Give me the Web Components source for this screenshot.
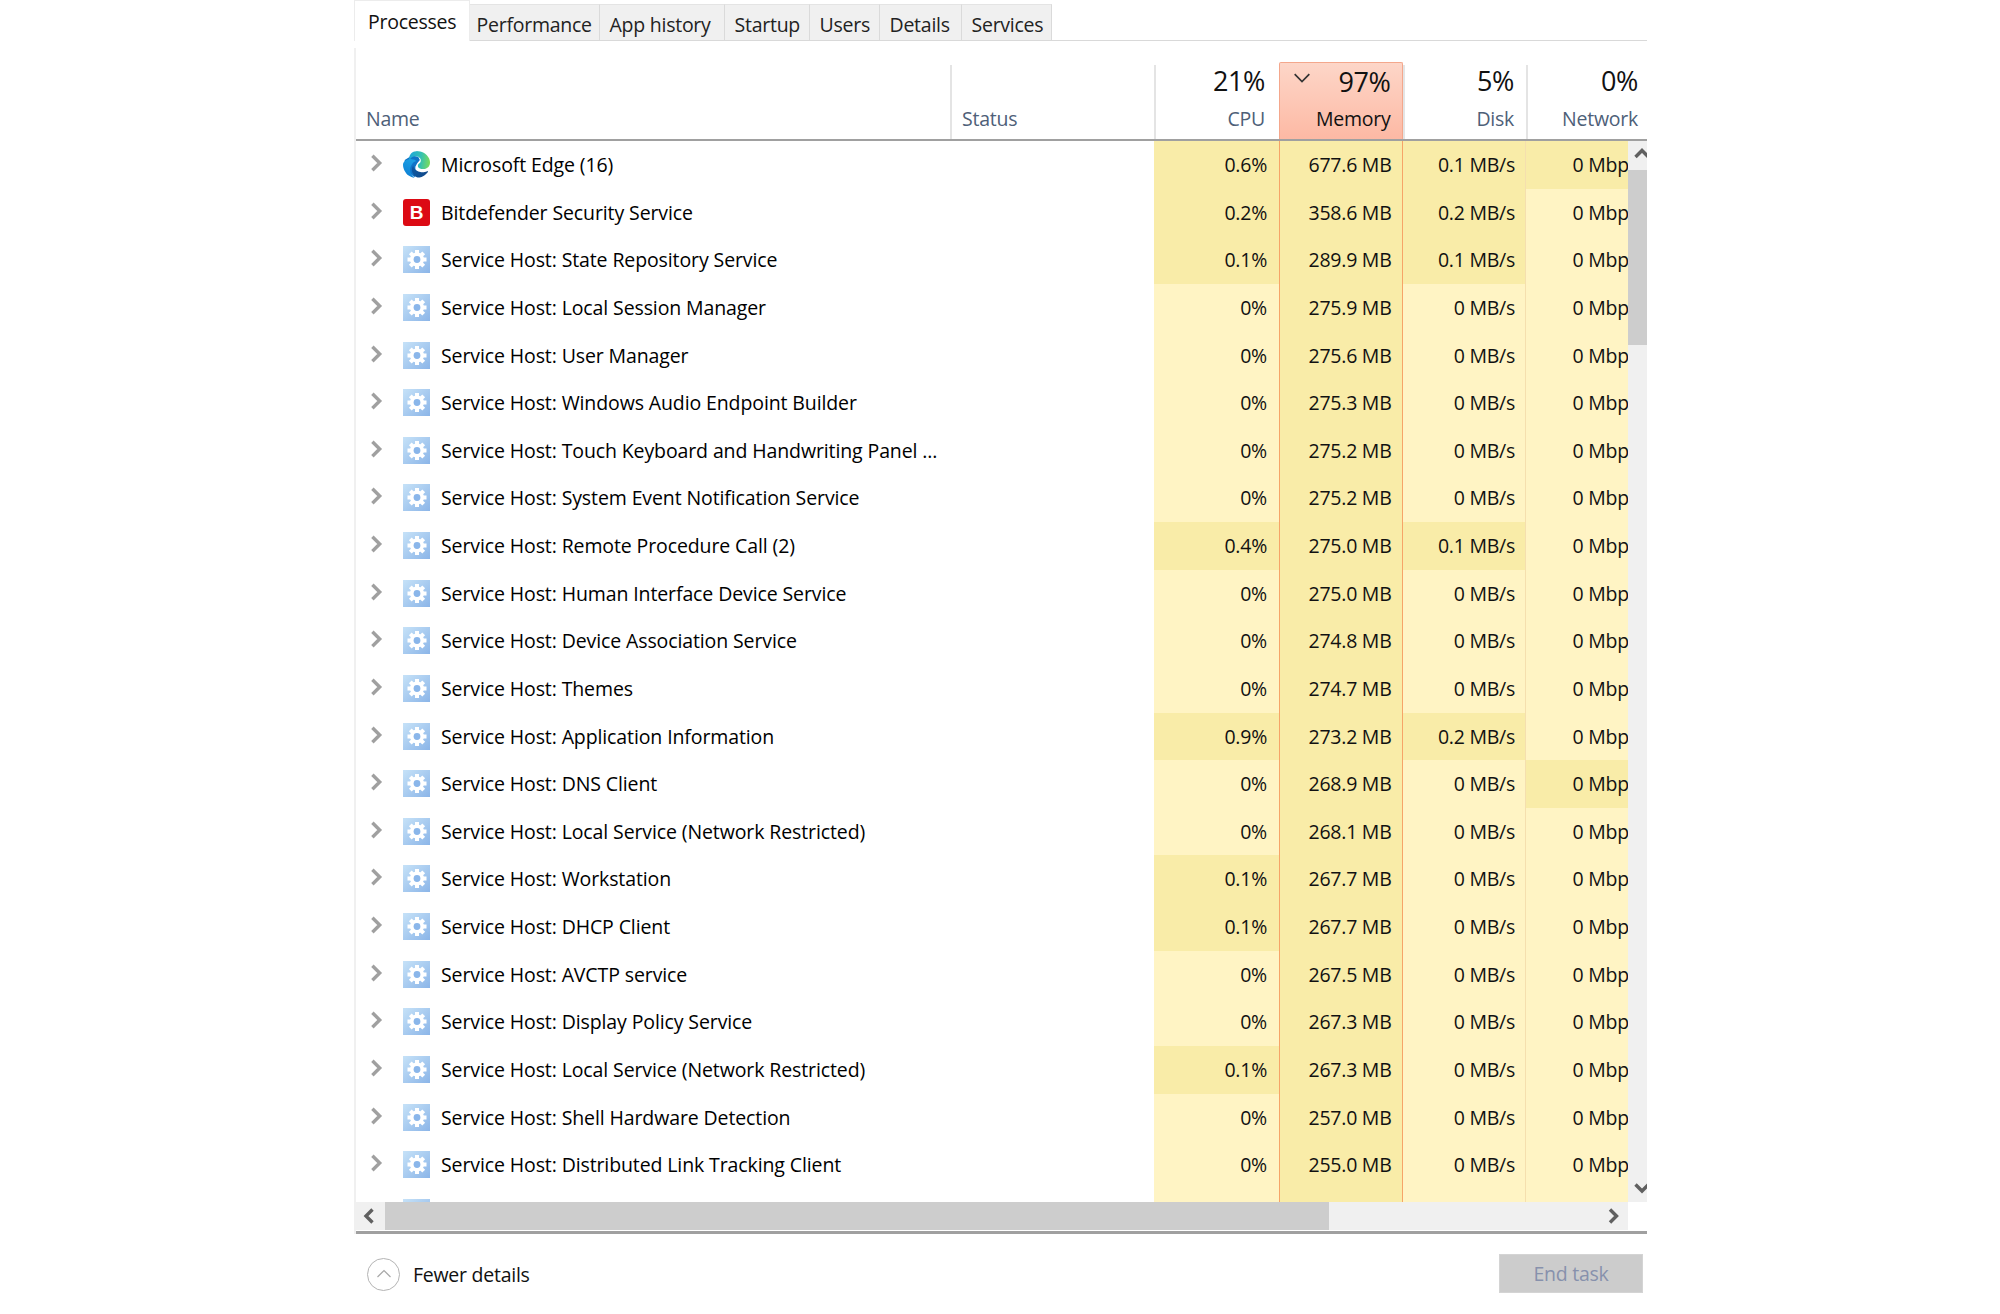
<!DOCTYPE html>
<html>
<head>
<meta charset="utf-8">
<title>Task Manager</title>
<style>
    html, body { margin: 0; padding: 0; background: #fff; }
    body { font-family: "Open Sans", "Liberation Sans", sans-serif; font-size: 19.5px; letter-spacing: -0.25px; color: #111; }
</style>
</head>
<body>
<tm-app></tm-app>
<script>
const gearIcon = `
<svg width="27" height="27" viewBox="0 0 27 27">
  <defs><linearGradient id="g" x1="0" y1="0" x2="1" y2="1"><stop offset="0" stop-color="#c6e2f8"/><stop offset="1" stop-color="#8bb5e8"/></linearGradient></defs>
  <rect width="27" height="27" fill="url(#g)"/>
  <g fill="#fff" stroke="#fff">
    <circle cx="14" cy="13.5" r="7" stroke="none"/>
    <g stroke-width="4">
      <path d="M14 4v19M4.5 13.5h19M7.3 6.8l13.4 13.4M20.7 6.8L7.3 20.2"/>
    </g>
  </g>
  <circle cx="14" cy="13.5" r="3.4" fill="#8ab6ea"/>
</svg>`;

const edgeIcon = `
<svg width="27" height="27" viewBox="0 0 24 24">
  <defs>
    <linearGradient id="e1" x1="0" y1="0" x2="1" y2="0.3"><stop offset="0" stop-color="#0c59a4"/><stop offset="1" stop-color="#114a8b"/></linearGradient>
    <linearGradient id="e2" x1="0.6" y1="0.1" x2="0.3" y2="1"><stop offset="0" stop-color="#1b9de2"/><stop offset="1" stop-color="#0c7ed4"/></linearGradient>
    <linearGradient id="e3" x1="0" y1="0.5" x2="1" y2="0.6"><stop offset="0" stop-color="#1fa8d8"/><stop offset="0.55" stop-color="#35c1b1"/><stop offset="1" stop-color="#7bdc5a"/></linearGradient>
  </defs>
  <path fill="#0f74c8" d="M1.5 8L8 4l5.5 1L15 8l-2.5 3L11 14v3l3 2-2 3-2 1-4-3-4-5z"/>
  <path fill="url(#e1)" d="M21.86 17.86q.14 0 .25.12.1.13.1.25t-.11.33l-.32.46-.43.53-.44.5q-.21.25-.38.42l-.22.23q-.58.53-1.34 1.04-.76.51-1.6.91-.86.4-1.74.64t-1.67.24q-.9 0-1.69-.28-.8-.28-1.48-.78-.68-.5-1.22-1.17-.53-.66-.92-1.44-.38-.77-.58-1.6-.2-.83-.2-1.67 0-1 .32-1.96.33-.97.87-1.8.14.95.55 1.77.41.82 1.02 1.5.6.68 1.38 1.21.78.54 1.64.9.86.36 1.77.56.92.2 1.8.2 1.12 0 2.18-.24 1.06-.23 2.06-.72l.2-.1.2-.05z"/>
  <path fill="url(#e2)" d="M6.36 16.59q0 1.1.27 2.15.27 1.06.78 2.03.51.96 1.24 1.77.74.82 1.66 1.4-1.47-.2-2.8-.74-1.33-.55-2.48-1.37-1.15-.83-2.08-1.9-.92-1.07-1.58-2.33T.36 14.94Q0 13.54 0 12.06q0-.81.32-1.49.31-.68.83-1.23.53-.55 1.2-.96.66-.4 1.35-.66.74-.27 1.5-.39.78-.12 1.55-.12.7 0 1.42.1.72.12 1.4.35.68.23 1.32.57.63.35 1.16.83-.35 0-.7.07-.33.07-.65.23v-.02q-.63.28-1.2.74-.57.46-1.05 1.04-.48.58-.87 1.26-.38.67-.65 1.39-.27.71-.42 1.44-.15.72-.15 1.38z"/>
  <path fill="url(#e3)" d="M11.96.06q1.7 0 3.33.39 1.63.38 3.07 1.15 1.43.77 2.62 1.93 1.18 1.16 1.98 2.7.49.94.76 1.96.28 1 .28 2.08 0 .89-.23 1.7-.24.8-.69 1.48-.45.68-1.1 1.22-.64.53-1.45.88-.54.24-1.11.36-.58.13-1.16.13-.42 0-.97-.03-.54-.03-1.1-.12-.55-.09-1.09-.28-.53-.2-.95-.53t-.68-.8q-.25-.5-.25-1.12 0-.37.11-.68.1-.31.3-.6.2-.28.45-.52.25-.24.53-.47l.06-.06q.55-.5.87-1.11.31-.62.31-1.34 0-.77-.4-1.45-.4-.68-1.06-1.18-.66-.5-1.46-.77-.8-.27-1.6-.27-.92 0-1.76.23-.85.23-1.56.65-.72.42-1.3 1-.57.59-.95 1.29-.22-.86-.22-1.68 0-.75.24-1.52.24-.76.64-1.43.41-.67.96-1.2.56-.54 1.17-.86.82-.43 1.72-.66.9-.23 1.82-.23z"/>
</svg>`;

const bitIcon = `<span class="bd">B</span>`;

const chevron = (dir, color, w, size = 16) => {
    const d = { right: 'M3 1.5l6.5 6.5L3 14.5', left: 'M9.5 1.5L3 8l6.5 6.5', up: 'M1.5 10L8 3.5l6.5 6.5', down: 'M1.5 5.5L8 12l6.5-6.5' }[dir];
    return `<svg style="display:block" width="${size}" height="${size}" viewBox="0 0 16 16" fill="none" stroke="${color}" stroke-width="${w}"><path d="${d}"/></svg>`;
};

class TmTab extends HTMLElement {
    constructor() {
        super();
        this.attachShadow({ mode: 'open' });
        this.shadowRoot.innerHTML = `
        <style>
            :host { display: block; box-sizing: border-box; height: 37px; margin-top: 4px; background: #f0f0f0; border-top: 1px solid #e4e4e4; border-right: 1px solid #dadada; border-bottom: 1px solid #d9d9d9; padding-left: 10px; line-height: 39px; color: #222; white-space: nowrap; }
            :host([active]) { height: 41px; margin-top: 0; background: #fff; border: 1px solid #ececec; border-bottom: 0; padding-left: 13px; line-height: 42px; color: #111; }
        </style>
        <slot></slot>`;
        this.style.width = this.getAttribute('w') + 'px';
        if (this.hasAttribute('pad')) this.style.paddingLeft = this.getAttribute('pad') + 'px';
    }
}
customElements.define('tm-tab', TmTab);

class TmHeadCell extends HTMLElement {
    constructor() {
        super();
        this.attachShadow({ mode: 'open' });
        const pct = this.getAttribute('pct');
        const sorted = this.hasAttribute('sorted');
        this.shadowRoot.innerHTML = `
        <style>
            :host { display: block; box-sizing: border-box; position: relative; height: 74px; border-left: 2px solid #e4e4e4; padding-right: 11px; text-align: right; color: #4e6078; }
            :host([left]) { text-align: left; padding: 0 0 0 10px; }
            :host([first]) { border-left: 0; padding-left: 10px; }
            :host([sorted]) { height: 77px; border: 1px solid #f4a78c; border-bottom: 0; border-radius: 2px 2px 0 0; background: linear-gradient(#fdd6c8, #fdb9a4); color: #111; padding-top: 3px; padding-right: 11px; margin-top: -3px; }
            .pct { height: 36px; line-height: 31px; font-size: 27px; color: #111; letter-spacing: -0.4px; }
            .lbl { height: 36px; line-height: 35px; }
            :host([sorted]) .lbl { line-height: 33px; }
            .sort { position: absolute; left: 13px; top: 5px; }
        </style>
        ${sorted ? `<span class="sort">${chevron('down', '#333', 1.5, 18)}</span>` : ''}
        <div class="pct">${pct || ''}</div>
        <div class="lbl"><slot></slot></div>`;
    }
}
customElements.define('tm-head-cell', TmHeadCell);

class TmHeader extends HTMLElement {
    constructor() {
        super();
        this.attachShadow({ mode: 'open' });
        this.shadowRoot.innerHTML = `
        <style>
            :host { display: grid; box-sizing: border-box; height: 93px; padding-top: 17px; grid-template-columns: var(--cols); width: 1291px; overflow: hidden; border-bottom: 2px solid #a0a0a0; }
        </style>
        <tm-head-cell first left>Name</tm-head-cell>
        <tm-head-cell left>Status</tm-head-cell>
        <tm-head-cell pct="21%" style="padding-right:14px">CPU</tm-head-cell>
        <tm-head-cell pct="97%" sorted>Memory</tm-head-cell>
        <tm-head-cell pct="5%" style="padding-right:12px">Disk</tm-head-cell>
        <tm-head-cell pct="0%">Network</tm-head-cell>`;
    }
}
customElements.define('tm-header', TmHeader);

class TmRow extends HTMLElement {
    constructor() {
        super();
        this.attachShadow({ mode: 'open' });
        const a = n => this.getAttribute(n);
        const hot = (a('hot') || '').split(',');
        const icon = { edge: edgeIcon, bit: bitIcon, gear: gearIcon }[a('icon')];
        const cell = (key, val) => `<div class="cell ${key} ${hot.includes(key) ? 'med' : ''}">${val}</div>`;
        this.shadowRoot.innerHTML = `
        <style>
            :host { display: grid; height: 47.63px; grid-template-columns: var(--cols); line-height: 48px; white-space: nowrap; }
            .name { display: flex; align-items: flex-start; }
            .exp { display: block; width: 18px; height: 18px; margin: 13px 0 0 13px; }
            .ico { display: block; width: 27px; height: 27px; margin: 10px 0 0 16px; }
            .ico svg { display: block; }
            .bd { display: block; width: 27px; height: 27px; border-radius: 3px; background: #dc0a14; color: #fff; font: bold 19px/27px "Liberation Sans", sans-serif; text-align: center; letter-spacing: 0; }
            .txt { margin-left: 11px; color: #000; letter-spacing: -0.11px; }
            .cell { box-sizing: border-box; background: #fff4c4; text-align: right; padding-right: 11px; color: #111; }
            .med { background: #f9eca8; }
            .cpu { padding-right: 12px; }
            .mem { background: #f9eca8; border-left: 1px solid #f6a468; border-right: 1px solid #f6a468; padding-right: 10px; }
            .disk { border-right: 1px solid #f5dfae; padding-right: 10px; }
        </style>
        <div class="name">
            <span class="exp">${chevron('right', '#a0a0a0', 3, 18)}</span>
            <span class="ico">${icon}</span>
            <span class="txt">${a('name')}</span>
        </div>
        <div></div>
        ${cell('cpu', a('cpu'))}${cell('mem', a('mem'))}${cell('disk', a('disk'))}${cell('net', a('net'))}`;
    }
}
customElements.define('tm-row', TmRow);

class TmApp extends HTMLElement {
    constructor() {
        super();
        this.attachShadow({ mode: 'open' });
        const tabs = [['Processes', 115.5, 1], ['Performance', 130, 0, 7], ['App history', 125], ['Startup', 85], ['Users', 70], ['Details', 82], ['Services', 90]];
        const S = 'Service Host: ';
        // name, cpu, mem, disk, highlighted cells, icon
        const rows = [
            ['Microsoft Edge (16)', '0.6%', '677.6 MB', '0.1 MB/s', 'cpu,disk,net', 'edge'],
            ['Bitdefender Security Service', '0.2%', '358.6 MB', '0.2 MB/s', 'cpu,disk', 'bit'],
            [S + 'State Repository Service', '0.1%', '289.9 MB', '0.1 MB/s', 'cpu,disk'],
            [S + 'Local Session Manager', '0%', '275.9 MB', '0 MB/s', ''],
            [S + 'User Manager', '0%', '275.6 MB', '0 MB/s', ''],
            [S + 'Windows Audio Endpoint Builder', '0%', '275.3 MB', '0 MB/s', ''],
            [S + 'Touch Keyboard and Handwriting Panel ...', '0%', '275.2 MB', '0 MB/s', ''],
            [S + 'System Event Notification Service', '0%', '275.2 MB', '0 MB/s', ''],
            [S + 'Remote Procedure Call (2)', '0.4%', '275.0 MB', '0.1 MB/s', 'cpu,disk'],
            [S + 'Human Interface Device Service', '0%', '275.0 MB', '0 MB/s', ''],
            [S + 'Device Association Service', '0%', '274.8 MB', '0 MB/s', ''],
            [S + 'Themes', '0%', '274.7 MB', '0 MB/s', ''],
            [S + 'Application Information', '0.9%', '273.2 MB', '0.2 MB/s', 'cpu,disk'],
            [S + 'DNS Client', '0%', '268.9 MB', '0 MB/s', 'net'],
            [S + 'Local Service (Network Restricted)', '0%', '268.1 MB', '0 MB/s', ''],
            [S + 'Workstation', '0.1%', '267.7 MB', '0 MB/s', 'cpu'],
            [S + 'DHCP Client', '0.1%', '267.7 MB', '0 MB/s', 'cpu'],
            [S + 'AVCTP service', '0%', '267.5 MB', '0 MB/s', ''],
            [S + 'Display Policy Service', '0%', '267.3 MB', '0 MB/s', ''],
            [S + 'Local Service (Network Restricted)', '0.1%', '267.3 MB', '0 MB/s', 'cpu'],
            [S + 'Shell Hardware Detection', '0%', '257.0 MB', '0 MB/s', ''],
            [S + 'Distributed Link Tracking Client', '0%', '255.0 MB', '0 MB/s', ''],
            ['', '', '', '', ''],
        ];
        this.shadowRoot.innerHTML = `
        <style>
            :host { display: block; width: 1293px; margin-left: 354px; --cols: 594px 204px 125px 123.5px 123.5px 123px; }
            .tabs { display: flex; height: 41px; }
            .tabs .rest { flex: 1; height: 40px; border-bottom: 1px solid #d9d9d9; }
            .panel { margin-top: 7px; border-left: 2px solid #f0f0f0; }
            .bodywrap { display: flex; height: 1061px; }
            .rows { width: 1272px; height: 1061px; overflow: hidden; flex: none; }
            .rows > tm-row { width: 1293px; }
            .vbar { position: relative; width: 19px; background: #f0f0f0; overflow: hidden; flex: none; }
            .vthumb { position: absolute; left: 0; right: 0; top: 29px; height: 175px; background: #cdcdcd; }
            .varrow { position: absolute; left: 6px; }
            .hbar { display: flex; height: 28px; }
            .hleft { width: 29px; box-sizing: border-box; padding-left: 1px; background: #f0f0f0; display: flex; align-items: center; justify-content: center; }
            .hthumb { width: 944px; background: #cdcdcd; }
            .hrest { width: 299px; background: #f0f0f0; display: flex; align-items: center; justify-content: flex-end; padding-right: 5px; box-sizing: border-box; }
            .endline { height: 3px; margin-top: 1px; background: #a0a0a0; }
            .foot { display: flex; justify-content: space-between; height: 81px; box-sizing: border-box; padding: 20px 4px 0 13px; }
            .less { display: flex; align-items: flex-start; }
            .circle { width: 33px; height: 33px; box-sizing: border-box; margin-top: 4px; border: 1px solid #b4b4b4; border-radius: 50%; display: flex; align-items: center; justify-content: center; }
            .less span { margin-left: 13px; line-height: 38px; padding-top: 2px; color: #111; }
            .end { width: 144px; height: 39px; box-sizing: border-box; background: #cccccc; border: 1px solid #d4d4d4; color: #8791ac; text-align: center; line-height: 38px; }
        </style>
        <div class="tabs">
            ${tabs.map(t => `<tm-tab w="${t[1]}" ${t[2] ? 'active' : ''} ${t[3] ? `pad="${t[3]}"` : ''}>${t[0]}</tm-tab>`).join('')}
            <div class="rest"></div>
        </div>
        <div class="panel">
            <tm-header></tm-header>
            <div class="bodywrap">
                <div class="rows">
                    ${rows.map(r => `<tm-row name="${r[0]}" cpu="${r[1]}" mem="${r[2]}" disk="${r[3]}" hot="${r[4]}" net="${r[0] ? '0 Mbps' : ''}" icon="${r[5] || 'gear'}"></tm-row>`).join('')}
                </div>
                <div class="vbar">
                    <span class="varrow" style="top:6px">${chevron('up', '#606060', 3.4)}</span>
                    <div class="vthumb"></div>
                    <span class="varrow" style="bottom:7px">${chevron('down', '#606060', 3.4)}</span>
                </div>
            </div>
            <div class="hbar">
                <div class="hleft">${chevron('left', '#606060', 3.4)}</div>
                <div class="hthumb"></div>
                <div class="hrest">${chevron('right', '#606060', 3.4)}</div>
            </div>
            <div class="endline"></div>
        </div>
        <div class="foot">
            <div class="less">
                <div class="circle">${chevron('up', '#a8a8a8', 1.2)}</div>
                <span>Fewer details</span>
            </div>
            <div class="end">End task</div>
        </div>`;
    }
}
customElements.define('tm-app', TmApp);
</script>
</body>
</html>
